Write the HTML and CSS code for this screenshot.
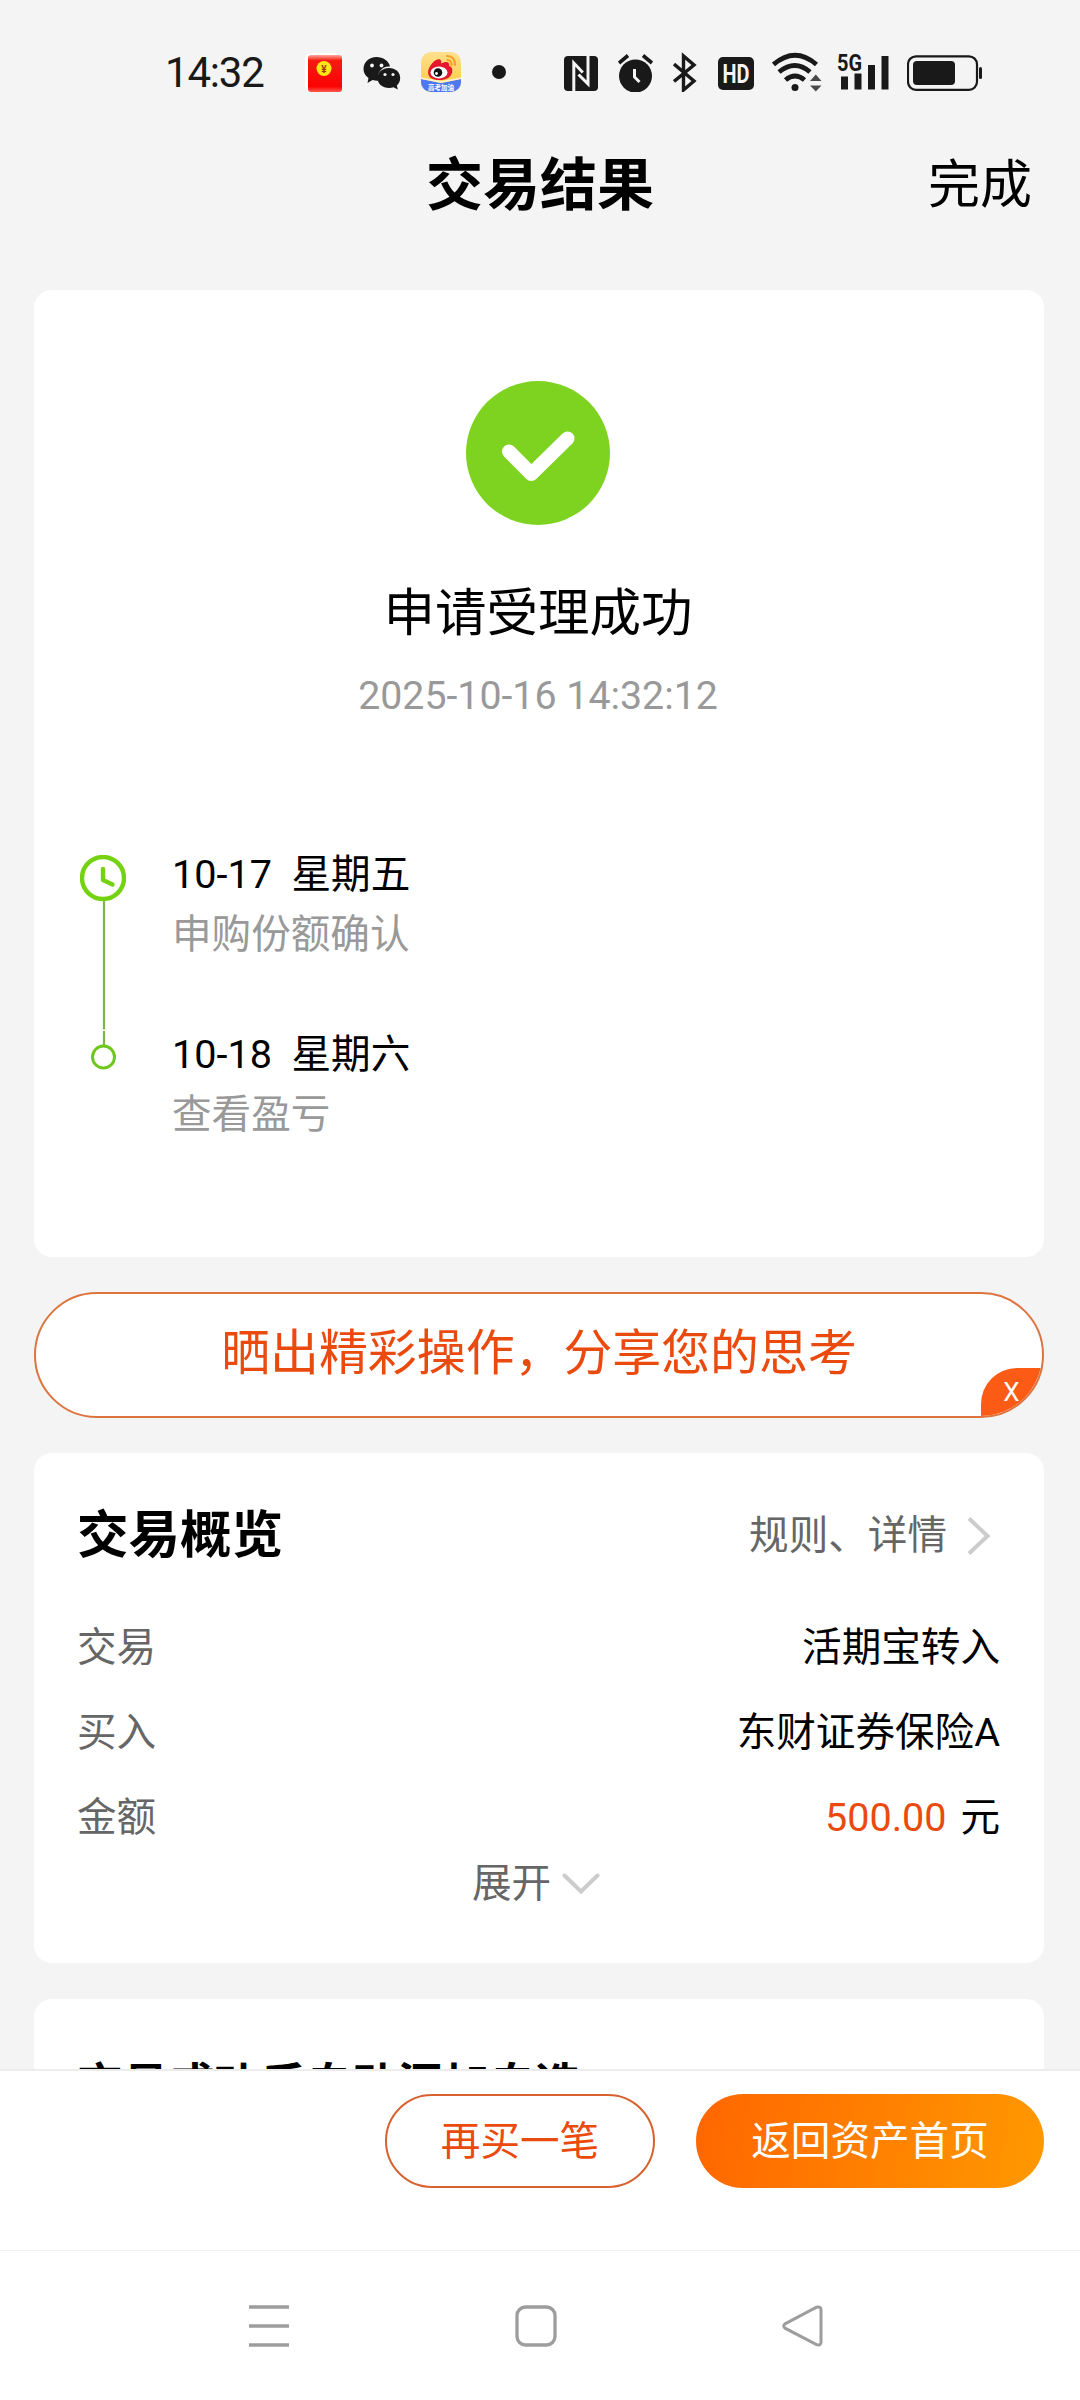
FILE: index.html
```html
<!DOCTYPE html>
<html lang="zh-CN">
<head>
  <meta charset="UTF-8">
  <meta name="viewport" content="width=device-width, initial-scale=1.0">
  <title>交易结果</title>
  <link rel="stylesheet" href="styles.css">
</head>
<body>
  <div class="status-bar">
    <span class="clock">14:32</span>
    <div class="notifications">
      <svg width="38" height="40" viewBox="0 0 38 40">
        <defs>
          <linearGradient id="packet" x1="0" y1="0" x2="0" y2="1">
            <stop offset="0" stop-color="#ffa99f"/>
            <stop offset="0.15" stop-color="#f51a10"/>
            <stop offset="0.85" stop-color="#fb0303"/>
            <stop offset="1" stop-color="#ff5a4e"/>
          </linearGradient>
        </defs>
        <rect x="0" y="1" width="34" height="39" rx="6" fill="#fff"/>
        <rect x="3" y="3" width="34" height="37" rx="3" fill="url(#packet)"/>
        <path d="M3 14q16 8 34 0" fill="none" stroke="#d92a12" stroke-width="1"/>
        <circle cx="19" cy="16.500" r="7.500" fill="#fde516"/>
        <text x="19" y="20.500" font-size="10" font-weight="700" text-anchor="middle" fill="#a03a00">¥</text>
      </svg>
      <svg width="38" height="40" viewBox="0 0 38 40">
        <path d="M13.500 5C6 5 .5 10 .5 17c0 4 2 7 5 9l-1 5 5-3q3 1 6 .8C13 20 20 13.500 27 14.500 26 9 20 5 13.500 5z" fill="#191919"/>
        <path d="M26 16c-6.500 0-11.500 4.300-11.500 10S19.500 36 26 36q2.500 0 4.500-.8l4.300 2.400-1-4c2-1.800 3.400-4.300 3.400-7.600C37.200 20.300 32.500 16 26 16z" fill="#191919"/>
        <circle cx="9" cy="13.500" r="1.900" fill="#f4f4f4"/>
        <circle cx="18.500" cy="13.500" r="1.900" fill="#f4f4f4"/>
        <circle cx="22" cy="22.500" r="1.600" fill="#f4f4f4"/>
        <circle cx="30" cy="22.500" r="1.600" fill="#f4f4f4"/>
      </svg>
      <svg width="40" height="40" viewBox="0 0 40 40">
        <defs>
          <linearGradient id="weibo" x1="0" y1="0" x2="0" y2="1">
            <stop offset="0" stop-color="#ffe08c"/>
            <stop offset="1" stop-color="#ffc93c"/>
          </linearGradient>
          <clipPath id="weiboClip"><rect width="40" height="40" rx="10"/></clipPath>
        </defs>
        <g clip-path="url(#weiboClip)">
          <rect width="40" height="40" fill="url(#weibo)"/>
          <path d="M0 27l20 4 20-4v13H0z" fill="#4d78f2"/>
          <path d="M0 27l20 4 20-4v-1.500L20 29 0 25.500z" fill="#fff3cf"/>
        </g>
        <path d="M7 20C8 13 15 6 19 7.500c2 .8 1 4 1 4 5-2.500 9-2 8 2.500 4 1.500 3.500 4 3 7C29 26.500 24 28 18 28S7 26 7 20z" fill="#e6162d"/>
        <ellipse cx="18" cy="20.500" rx="8.500" ry="6" fill="#fff"/>
        <circle cx="17" cy="20.500" r="4.300" fill="#111"/>
        <circle cx="15.500" cy="21.500" r="1.400" fill="#fff"/>
        <path d="M26 4q8 0 8 9M26.500 8q4 .5 4 5" fill="none" stroke="#f7a02c" stroke-width="2.200" stroke-linecap="round"/>
        <text x="20" y="37.500" font-size="6.500" font-weight="700" text-anchor="middle" fill="#fff">高考加油</text>
      </svg>
      <span class="more-dot"></span>
    </div>
    <div class="system-icons">
      <svg width="34" height="40" viewBox="0 0 34 40">
        <rect y="4" width="34" height="35" rx="4" fill="#191919"/>
        <path d="M9.800 39V11l9 9.500M24 4v28l-9.500-9.500" fill="none" stroke="#f4f4f4" stroke-width="3"/>
      </svg>
      <svg class="i-alarm" width="36" height="40" viewBox="0 0 36 40">
        <circle cx="17.500" cy="24" r="16.500" fill="#191919"/>
        <path d="M1 11l9-7.500M34 11l-9-7.500" stroke="#191919" stroke-width="3.600"/>
        <path d="M16.500 17v8l5 5" fill="none" stroke="#f4f4f4" stroke-width="3"/>
      </svg>
      <svg class="i-bt" width="24" height="40" viewBox="0 0 24 40">
        <path d="M1 12l20 17-10.500 9V4L21 13 1 29.500" fill="none" stroke="#191919" stroke-width="3.400"/>
      </svg>
      <svg class="i-hd" width="36" height="40" viewBox="0 0 36 40">
        <rect y="5" width="36" height="33" rx="5" fill="#191919"/>
        <text x="18" y="30.500" font-size="25" font-weight="700" text-anchor="middle" textLength="27" lengthAdjust="spacingAndGlyphs" fill="#f4f4f4">HD</text>
      </svg>
      <svg class="i-wifi" width="50" height="40" viewBox="0 0 50 40">
        <path d="M1.500 12.500Q23 -6 44.500 12.500M7 20q16-13 31 0M13.500 28q9.500-8 19 0" fill="none" stroke="#191919" stroke-width="4.800"/>
        <circle cx="23" cy="35.500" r="3.500" fill="#191919"/>
        <path d="M38 29l5.800-6.500 5.700 6.500zM38 33.500h11.500L43.800 39.500z" fill="#4a4a4a"/>
      </svg>
      <svg class="i-signal" width="52" height="40" viewBox="0 0 52 40">
        <text x="0" y="18.500" font-size="23" font-weight="700" textLength="25" lengthAdjust="spacingAndGlyphs" fill="#191919">5G</text>
        <path d="M7.500 24.500v13M21 21.500v16M34.500 13v24.500M48 4v33.500" stroke="#191919" stroke-width="7"/>
      </svg>
      <svg class="i-battery" width="76" height="40" viewBox="0 0 76 40">
        <rect x="1" y="4.300" width="69" height="33.500" rx="8" fill="none" stroke="#191919" stroke-width="2.200"/>
        <rect x="6" y="9" width="42" height="24" rx="4" fill="#191919"/>
        <rect x="72" y="15" width="3" height="12" rx="1.500" fill="#191919"/>
      </svg>
    </div>
  </div>

  <header class="page-header">
    <h1>交易结果</h1>
    <a class="done">完成</a>
  </header>

  <main class="content">
    <section class="card result-card">
      <svg class="success-icon" width="144" height="144" viewBox="0 0 144 144">
        <circle cx="72" cy="72" r="72" fill="#7ed321"/>
        <path d="M43 70.500l22.300 22.500L101.500 57.500" fill="none" stroke="#fff" stroke-width="14" stroke-linecap="round" stroke-linejoin="round"/>
      </svg>
      <h2>申请受理成功</h2>
      <p class="result-time">2025-10-16 14:32:12</p>

      <div class="timeline">
        <svg class="timeline-track" width="46" height="220" viewBox="0 0 46 220">
          <path d="M24 45v129.500M24 176v14" stroke="#7fb64a" stroke-width="2.200"/>
          <circle cx="23" cy="23" r="21" fill="#fff" stroke="#75d211" stroke-width="4.400"/>
          <path d="M23 14v11l9.500 4.500" fill="none" stroke="#75d211" stroke-width="4.400" stroke-linecap="round" stroke-linejoin="round"/>
          <circle cx="23.500" cy="202" r="11" fill="#fff" stroke="#6ec81c" stroke-width="3"/>
        </svg>
        <ul class="steps">
          <li>
            <p class="step-date">10-17&nbsp; 星期五</p>
            <p class="step-text">申购份额确认</p>
          </li>
          <li>
            <p class="step-date">10-18&nbsp; 星期六</p>
            <p class="step-text">查看盈亏</p>
          </li>
        </ul>
      </div>
    </section>

    <div class="share-banner">
      <span>晒出精彩操作，分享您的思考</span>
      <div class="share-clip"><span class="share-close">X</span></div>
    </div>

    <section class="card overview-card">
      <div class="overview-head">
        <h3>交易概览</h3>
        <a class="rules">规则、详情
          <svg width="24" height="40" viewBox="0 0 24 40"><path d="M2 2.500L20.500 20 2 37.500" fill="none" stroke="#ccc" stroke-width="4"/></svg>
        </a>
      </div>
      <div class="row"><span class="label">交易</span><span>活期宝转入</span></div>
      <div class="row"><span class="label">买入</span><span>东财证券保险A</span></div>
      <div class="row"><span class="label">金额</span><span><em>500.00</em> 元</span></div>
      <a class="expand">展开
        <svg width="38" height="24" viewBox="0 0 38 24"><path d="M2.500 3.500L19 19.500 35.500 3.500" fill="none" stroke="#ccc" stroke-width="4" stroke-linecap="round"/></svg>
      </a>
    </section>

    <section class="card watch-card">
      <h3>交易成功后自动添加自选</h3>
    </section>
  </main>

  <footer class="action-bar">
    <button class="btn btn-outline">再买一笔</button>
    <button class="btn btn-primary">返回资产首页</button>
  </footer>

  <nav class="system-nav">
    <svg width="42" height="42" viewBox="0 0 42 42"><path d="M1 2h40M1 21h40M1 40h40" stroke="#9d9d9d" stroke-width="3.500"/></svg>
    <svg width="42" height="42" viewBox="0 0 42 42"><rect x="2" y="2" width="38" height="38" rx="8.500" fill="none" stroke="#9d9d9d" stroke-width="3.300"/></svg>
    <svg width="42" height="42" viewBox="0 0 42 42"><path d="M3 18.800L34.500 2.200Q39 1 39 5V37q0 4-4.500 2.600L3 23.200Q.5 21 3 18.800z" fill="none" stroke="#9d9d9d" stroke-width="3"/></svg>
  </nav>
</body>
</html>
```
FILE: styles.css
```css
* {
  box-sizing: border-box;
}

body {
  margin: 0;
  height: 2400px;
  display: flex;
  flex-direction: column;
  overflow: hidden;
  background: #f4f4f4;
  color: #000;
  font-family: Roboto, "Noto Sans CJK SC", sans-serif;
  font-size: 39.6px;
}

h1, h2, h3, p, ul {
  margin: 0;
  padding: 0;
}

svg {
  display: block;
  flex: none;
}

/* phone status bar */
.status-bar {
  display: flex;
  align-items: center;
  height: 144px;
  padding: 0 97px 0 165px;
  color: #191919;
}

.clock {
  width: 140px;
  font-size: 42px;
  letter-spacing: -1.2px;
}

.notifications {
  display: flex;
  align-items: center;
  gap: 20px;
}

.more-dot {
  width: 14px;
  height: 14px;
  margin-left: 11px;
  border-radius: 50%;
  background: #191919;
}

.system-icons {
  display: flex;
  margin-left: auto;
}

.i-alarm { margin-left: 20px; }
.i-bt { margin-left: 19px; }
.i-hd { margin-left: 21px; }
.i-wifi { margin-left: 18px; }
.i-signal { margin-left: 15px; }
.i-battery { margin-left: 18px; }

/* page header */
.page-header {
  display: grid;
  grid-template-columns: 1fr auto 1fr;
  align-items: center;
  height: 146px;
  padding: 0 48px 62px;
  line-height: 84px;
}

.page-header h1 {
  grid-column: 2;
  font-size: 57px;
  font-weight: 700;
}

.done {
  justify-self: end;
  font-size: 52px;
}

.content {
  flex: 1;
  min-height: 0;
  display: flex;
  flex-direction: column;
  gap: 35px;
  padding: 0 36px 0 34px;
  overflow: hidden;
}

.card {
  flex: none;
  padding: 0 44px 0 43px;
  border-radius: 18px;
  background: #fff;
}

/* result */
.result-card {
  display: flex;
  flex-direction: column;
  align-items: center;
  height: 967px;
  padding-top: 91px;
  padding-right: 45px;
}

.result-card h2 {
  margin-top: 53px;
  font-size: 51.5px;
  font-weight: 400;
  line-height: 72px;
}

.result-time {
  margin-top: 18px;
  font-size: 39.3px;
  line-height: 56px;
  color: #999;
}

.timeline {
  align-self: stretch;
  display: flex;
  gap: 46px;
  margin-top: 121px;
  padding-left: 3px;
}

.timeline-track {
  margin-top: 10px;
}

.steps {
  list-style: none;
}

.steps li {
  height: 180px;
}

.steps p {
  line-height: 60px;
}

.step-text {
  color: #999;
}

/* share banner */
.share-banner {
  position: relative;
  flex: none;
  display: flex;
  justify-content: center;
  height: 126px;
  border: 2px solid #dd7440;
  border-radius: 63px;
  background: #fff;
  color: #ea4a0d;
  font-size: 48.9px;
  line-height: 120px;
}

.share-clip {
  position: absolute;
  inset: 0;
  border-radius: 62px;
  overflow: hidden;
}

.share-close {
  position: absolute;
  right: 0;
  bottom: 0;
  width: 61px;
  height: 48px;
  border-radius: 36px 0 0 0;
  background: #fb5b14;
  color: #fff;
  font-size: 26px;
  line-height: 48px;
  text-align: center;
}

/* overview */
.overview-card {
  height: 510px;
  padding-top: 42px;
}

.overview-head {
  display: flex;
  align-items: center;
  justify-content: space-between;
  height: 82px;
  margin-bottom: 28px;
  line-height: 82px;
}

.overview-head h3 {
  font-size: 51.5px;
}

.rules {
  display: flex;
  align-items: center;
  gap: 20px;
  padding-right: 9px;
  color: #666;
}

.row {
  display: flex;
  justify-content: space-between;
  line-height: 85px;
}

.row .label {
  color: #666;
}

.row em {
  margin-right: 4px;
  color: #ea4a0d;
  font-style: normal;
}

.expand {
  display: flex;
  align-items: center;
  justify-content: center;
  gap: 11px;
  margin-right: 5px;
  line-height: 48px;
  color: #666;
}

.watch-card {
  height: 300px;
  margin-top: 1px;
  padding-top: 57px;
}

.watch-card h3 {
  font-size: 45.8px;
  line-height: 60px;
}

/* bottom actions */
.action-bar {
  flex: none;
  display: flex;
  justify-content: flex-end;
  gap: 41px;
  height: 181px;
  padding: 23px 36px 0;
  border-top: 2px solid #ececec;
  background: #fff;
}

.btn {
  height: 94px;
  padding: 0 0 8px;
  border: none;
  border-radius: 47px;
  font-family: inherit;
  font-size: 39.6px;
}

.btn-outline {
  width: 270px;
  border: 2px solid #d8622f;
  background: #fff;
  color: #ea4a0d;
}

.btn-primary {
  width: 348px;
  background: linear-gradient(100deg, #ff6600, #ff9900);
  color: #fff;
}

.system-nav {
  flex: none;
  display: flex;
  justify-content: space-between;
  height: 150px;
  padding: 54px 256px 0 248px;
  border-top: 1px solid #f0f0f0;
  background: #fff;
}
```
